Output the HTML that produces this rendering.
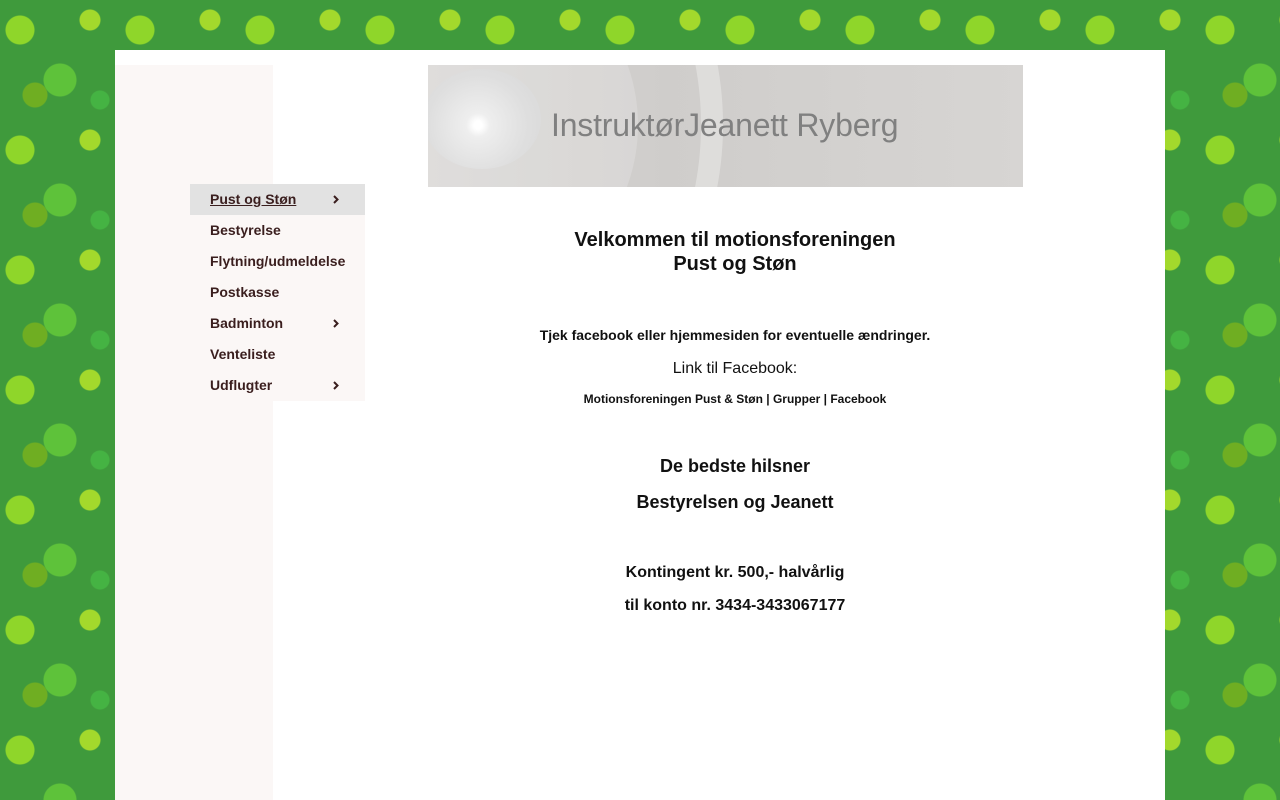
<!DOCTYPE html>
<html><head><meta charset="utf-8"><style>
html,body{margin:0;padding:0;width:1280px;height:800px;overflow:hidden}
body{background-color:#3f9a3c;
background-image:
radial-gradient(circle at 20px 30px,#8fd62a 0 14px,transparent 15px),
radial-gradient(circle at 60px 80px,#5ec23a 0 16px,transparent 17px),
radial-gradient(circle at 90px 20px,#a3d92c 0 10px,transparent 11px),
radial-gradient(circle at 35px 95px,#6fae22 0 12px,transparent 13px),
radial-gradient(circle at 100px 100px,#45b343 0 9px,transparent 10px);
background-size:120px 120px;
font-family:"Liberation Sans",sans-serif}
.page{position:absolute;left:115px;top:50px;width:1050px;height:750px;background:#fff}
.side{position:absolute;left:0;top:15px;width:158px;height:735px;background:#fbf7f6}
.menu{position:absolute;left:75px;top:134px;width:175px;background:#fbf7f6}
.menu div{height:31px;line-height:31px;padding-left:20px;font-size:14px;font-weight:bold;color:#3a1e1e;position:relative}
.menu div.act{background:#e2e2e2;text-decoration:underline}
.menu div svg{position:absolute;left:143px;top:11px}
.banner{position:absolute;left:313px;top:15px;width:595px;height:122px;overflow:hidden;
background:linear-gradient(90deg,#d8d6d4,#cfcdcb 40%,#d7d5d3)}
.banner .c{position:absolute;border-radius:50%}
.banner h1{position:absolute;left:123px;top:42px;margin:0;font-weight:normal;font-size:32px;letter-spacing:-0.2px;color:#808080}
.ct{position:absolute;left:313px;width:614px;text-align:center;color:#111;font-weight:bold}
</style></head><body>
<div class="page">
<div class="side"></div>
<div class="menu">
<div class="act">Pust og Støn<svg width="6" height="9"><path d="M1 1l3.5 3.5L1 8" stroke="#3a1e1e" stroke-width="2" fill="none"/></svg></div>
<div>Bestyrelse</div>
<div>Flytning/udmeldelse</div>
<div>Postkasse</div>
<div>Badminton<svg width="6" height="9"><path d="M1 1l3.5 3.5L1 8" stroke="#3a1e1e" stroke-width="2" fill="none"/></svg></div>
<div>Venteliste</div>
<div>Udflugter<svg width="6" height="9"><path d="M1 1l3.5 3.5L1 8" stroke="#3a1e1e" stroke-width="2" fill="none"/></svg></div>
</div>
<div class="banner">
<div class="c" style="left:60px;top:-140px;width:235px;height:400px;border:22px solid rgba(255,255,255,.3);border-left-color:transparent;box-sizing:border-box"></div>
<div class="c" style="left:-40px;top:-90px;width:250px;height:300px;background:rgba(255,255,255,.18)"></div>
<div class="c" style="left:-5px;top:4px;width:118px;height:100px;background:radial-gradient(circle at 55px 56px,#fff 0 4px,#eee 12px,#dedede 60%,#d8d8d8)"></div>
<h1>InstruktørJeanett Ryberg</h1>
</div>
<div class="ct" style="top:178px;font-size:20px;line-height:24px">Velkommen til motionsforeningen<br>Pust og Støn</div>
<div class="ct" style="top:277px;font-size:14px">Tjek facebook eller hjemmesiden for eventuelle ændringer.</div>
<div class="ct" style="top:310px;font-size:16px;font-weight:normal">Link til Facebook:</div>
<div class="ct" style="top:342px;font-size:12px">Motionsforeningen Pust &amp; Støn | Grupper | Facebook</div>
<div class="ct" style="top:406px;font-size:18px">De bedste hilsner</div>
<div class="ct" style="top:442px;font-size:18px">Bestyrelsen og Jeanett</div>
<div class="ct" style="top:514px;font-size:16px">Kontingent kr. 500,- halvårlig</div>
<div class="ct" style="top:547px;font-size:16px">til konto nr. 3434-3433067177</div>
</div>
</body></html>
